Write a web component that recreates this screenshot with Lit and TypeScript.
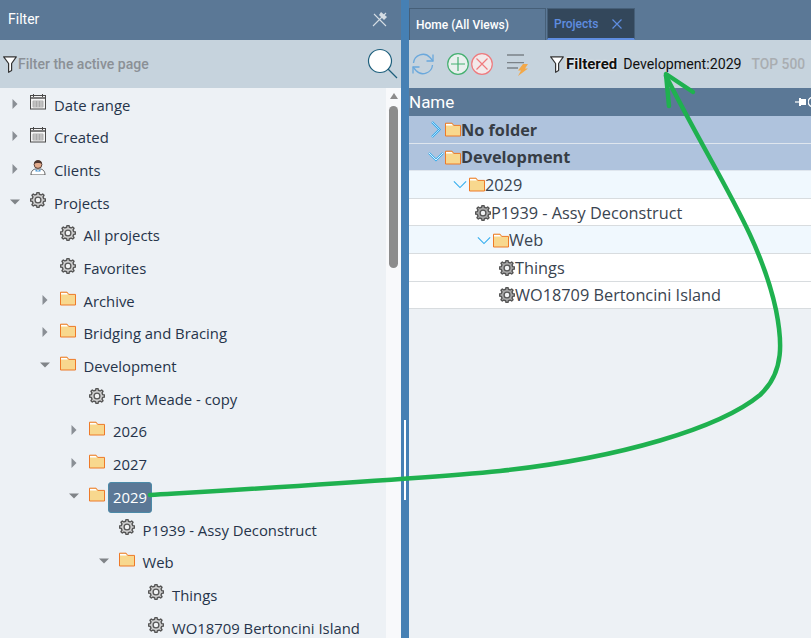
import { LitElement, html, css, svg } from "lit";
import { customElement } from "lit/decorators.js";

function gearPath(cx: number, cy: number, ro: number, ri: number, n = 8) {
  const pts: string[] = [];
  const step = (Math.PI * 2) / n;
  for (let i = 0; i < n; i++) {
    const a = i * step - Math.PI / 2;
    const w = step * 0.2;
    const v = step * 0.3;
    const p = (r: number, t: number) => `${(cx + r * Math.cos(t)).toFixed(2)} ${(cy + r * Math.sin(t)).toFixed(2)}`;
    pts.push(p(ri, a - v), p(ro, a - w * 0.8), p(ro, a + w * 0.8), p(ri, a + v));
  }
  return "M" + pts.join("L") + "Z";
}
const gear = (fill: string) => html`<svg class="ic" viewBox="0 0 16 16" width="16" height="16">
  <path d=${gearPath(8, 8, 7.6, 5.9)} fill=${fill} stroke="#555" stroke-width="1.4" stroke-linejoin="round"></path>
  <circle cx="8" cy="8" r="2.9" fill="#f2f3f4" stroke="#555" stroke-width="1.3"></circle>
</svg>`;
const folder = html`<svg class="ic" viewBox="0 0 16 15" width="16" height="15">
  <path d="M.5 14V1.2h6.6l1.6 2.2h6.8V14z" fill="#f8d88e" stroke="#ee7a28" stroke-width="1"></path>
  <path d="M1 2h5.7l1.1 1.5H1z" fill="#fff"></path>
</svg>`;
const calendar = html`<svg class="ic" viewBox="0 0 16 16" width="16" height="16">
  <rect x=".5" y="1.5" width="15" height="13.5" fill="#f4f4f4" stroke="#4a4a4a"></rect>
  <path d="M.5 4h15" stroke="#4a4a4a" stroke-width="1.4"></path>
  <path d="M3.5 0v3M12.5 0v3" stroke="#4a4a4a"></path>
  <path d="M3 7h10v6H3zM3 9h10M3 11h10M6.5 7v6M9.500 7v6" fill="#d4d4d4" stroke="#a3a3a3" stroke-width=".8"></path>
</svg>`;
const person = html`<svg class="ic" viewBox="0 0 16 16" width="16" height="16">
  <path d="M1 16c0-4 2-5.500 4.500-6h5c2.500.5 4.500 2 4.500 6z" fill="#fff" stroke="#555" stroke-width="1"></path>
  <path d="M5.500 10l2.500 2 2.500-2v2.500h-5z" fill="#4f9ad4"></path>
  <circle cx="8" cy="5.500" r="3.900" fill="#e3ab8c" stroke="#5a4138" stroke-width="1"></circle>
  <path d="M4.100 5C4.300 2 6 1.200 8 1.200s3.700 .8 3.900 3.800C10 3.600 6 3.600 4.100 5z" fill="#4d362e"></path>
</svg>`;
const funnel = html`<svg viewBox="0 0 14 17" width="14" height="17">
  <path d="M.7 .8h12.600L8.600 7.500V14.500l-3 1.800V7.500z" fill="#fff" stroke="#333" stroke-width="1.200" stroke-linejoin="round"></path>
</svg>`;

type L = { t: string; l: number; c?: "r" | "d"; i: "cal" | "per" | "gear" | "fol"; sel?: boolean };
const left: L[] = [
  { t: "Date range", l: 0, c: "r", i: "cal" },
  { t: "Created", l: 0, c: "r", i: "cal" },
  { t: "Clients", l: 0, c: "r", i: "per" },
  { t: "Projects", l: 0, c: "d", i: "gear" },
  { t: "All projects", l: 1, i: "gear" },
  { t: "Favorites", l: 1, i: "gear" },
  { t: "Archive", l: 1, c: "r", i: "fol" },
  { t: "Bridging and Bracing", l: 1, c: "r", i: "fol" },
  { t: "Development", l: 1, c: "d", i: "fol" },
  { t: "Fort Meade - copy", l: 2, i: "gear" },
  { t: "2026", l: 2, c: "r", i: "fol" },
  { t: "2027", l: 2, c: "r", i: "fol" },
  { t: "2029", l: 2, c: "d", i: "fol", sel: true },
  { t: "P1939 - Assy Deconstruct", l: 3, i: "gear" },
  { t: "Web", l: 3, c: "d", i: "fol" },
  { t: "Things", l: 4, i: "gear" },
  { t: "WO18709 Bertoncini Island", l: 4, i: "gear" },
];
type R = { t: string; l: number; kind: "group" | "sub" | "leaf"; c?: "r" | "d" };
const right: R[] = [
  { t: "No folder", l: 0, kind: "group", c: "r" },
  { t: "Development", l: 0, kind: "group", c: "d" },
  { t: "2029", l: 1, kind: "sub", c: "d" },
  { t: "P1939 - Assy Deconstruct", l: 2, kind: "leaf" },
  { t: "Web", l: 2, kind: "sub", c: "d" },
  { t: "Things", l: 3, kind: "leaf" },
  { t: "WO18709 Bertoncini Island", l: 3, kind: "leaf" },
];

@customElement("app-root")
export class AppRoot extends LitElement {
  static styles = css`
    :host { display: block; position: relative; height: 638px; width: 811px; overflow: hidden; font-family: "Roboto", sans-serif; background: #edf1f5; }
    .root { display: flex; height: 100%; }
    .leftp { width: 401px; display: flex; flex-direction: column; flex: none; }
    .split { width: 8px; flex: none; background: #4680b4; display: flex; justify-content: center; padding-top: 420px; box-sizing: border-box; }
    .grip { width: 2px; height: 80px; background: #fff; }
    .rightp { flex: 1; display: flex; flex-direction: column; min-width: 0; }
    .phead { height: 40px; flex: none; background: #5b7896; display: flex; align-items: center; justify-content: space-between; padding: 0 13px 2px 8px; color: #fff; font-size: 14px; box-sizing: border-box; }
    .search { height: 48px; flex: none; background: #c6d3dd; display: flex; align-items: center; padding: 0 3px; box-sizing: border-box; color: #8b9096; font-size: 14px; font-weight: 500; }
    .search .ph { flex: 1; margin-left: 1px; }
    .body { flex: 1; display: flex; min-height: 0; }
    .tree { flex: 1; overflow: hidden; font-family: "Open Sans", sans-serif; font-size: 14.850px; color: #26344a; min-width: 0; padding-top: .5px; }
    .row { height: 32.7px; display: flex; align-items: center; white-space: nowrap; padding-top: .5px; box-sizing: border-box; }
    .chev { width: 18px; flex: none; display: flex; justify-content: center; margin-bottom: 3px; }
    .ic { flex: none; }
    .tree .ic { margin: 0 0 6px 6px; }
    .lab { margin-left: 3px; padding: 0 4px; line-height: 29px; border: 1px solid transparent; border-radius: 3px; }
    .lab.sel { background: #5b7896; border-color: #4b8aa8; color: #fff; }
    .sb { width: 15px; flex: none; background: #f8f9fb; display: flex; flex-direction: column; align-items: center; padding-top: 5px; box-sizing: border-box; }
    .sbup { width: 0; height: 0; border: 4.500px solid transparent; border-top: 0; border-bottom: 6px solid #8c8c8c; }
    .thumb { width: 9px; height: 162px; background: #8c8c8c; border-radius: 5px; margin-top: 7px; }
    .tabs { height: 40px; flex: none; background: #5b7896; display: flex; align-items: flex-end; padding-top: 8px; box-sizing: border-box; }
    .tab { height: 32px; box-sizing: border-box; display: flex; align-items: center; font-size: 12px; font-weight: 500; border: 1px solid #465f78; border-bottom: 0; }
    .tab.home { width: 137px; padding-left: 6px; color: #fff; background: #5b7896; margin-right: 1px; }
    .tab.act { width: 88px; padding-left: 6px; background: #33475b; color: #5f8de0; border-bottom: 2px solid #5f8de0; gap: 14px; }
    .tool { height: 48px; flex: none; background: #c6d3dd; display: flex; align-items: center; box-sizing: border-box; padding-left: 3px; }
    .filtered { font-size: 15px; font-weight: 700; color: #111; margin: 0 6px 0 2px; text-shadow: 0 0 2px #fff, 0 0 2px #fff; }
    .dev { font-size: 14.200px; color: #111; }
    .top { font-size: 13.800px; font-weight: 500; color: #a9adb1; margin-left: 10px; white-space: nowrap; }
    .tool svg { flex: none; }
    .nameh { height: 28px; flex: none; background: #5b7896; color: #fff; font-size: 17px; display: flex; align-items: center; justify-content: space-between; box-sizing: border-box; }
    .pin { display: flex; align-items: center; gap: 2px; }
    .rr { height: 27.6px; display: flex; align-items: center; box-sizing: border-box; padding-top: 1px; border-bottom: 1px solid #d8dcdf; font-family: "Open Sans", sans-serif; font-size: 16.300px; color: #3a4450; white-space: nowrap; }
    .rr.group { background: #afc3dd; font-weight: 700; border-bottom-color: #dfe6ee; color: #373d45; }
    .rr.sub { background: #f0f8fe; }
    .rr.leaf { background: #fff; }
    .rr.leaf .ic { margin-left: 1px; }
    .rchev { width: 19px; flex: none; display: flex; justify-content: center; }
    .overlay { position: absolute; left: 0; top: 0; pointer-events: none; }
  `;

  private tri(c?: "r" | "d") {
    if (c === "r") return html`<svg width="6" height="10" viewBox="0 0 6 10"><path d="M.5 0L5.500 5 .5 10z" fill="#8a8f95"></path></svg>`;
    if (c === "d") return html`<svg width="10" height="6" viewBox="0 0 10 6"><path d="M0 .5h10L5 5.500z" fill="#808488"></path></svg>`;
    return "";
  }
  private rchev(c: "r" | "d" | undefined, big: boolean) {
    if (c === "r") return html`<svg width="10" height="17" viewBox="0 0 10 17" fill="none"><path d="M1 1l7.500 7.500L1 16" stroke="#2ea8ee" stroke-width="2.200"></path><path d="M1 1l7.500 7.500L1 16" stroke="#e8f6ff" stroke-width=".7"></path></svg>`;
    if (big) return html`<svg width="16" height="10" viewBox="0 0 16 10" fill="none"><path d="M1 1l7 7 7-7" stroke="#35aeee" stroke-width="2.200"></path><path d="M1 1l7 7 7-7" stroke="#f2faff" stroke-width=".9"></path></svg>`;
    return html`<svg width="14" height="9" viewBox="0 0 16 9"><path d="M1 1l7 7 7-7" fill="none" stroke="#35aeee" stroke-width="1.300"></path></svg>`;
  }
  private icon(i: L["i"]) {
    return i === "cal" ? calendar : i === "per" ? person : i === "gear" ? gear("#cfcfcf") : folder;
  }

  render() {
    return html`
      <div class="root">
        <section class="leftp">
          <div class="phead"><span>Filter</span>
            <svg width="16" height="16" viewBox="0 0 16 16"><path d="M1 15L14 2M2 3l12 12" stroke="#d5dde4" stroke-width="1.100"></path><path d="M9 1l6 5-3 3-5-5z" fill="#d5dde4"></path></svg>
          </div>
          <div class="search">${funnel}<span class="ph">Filter the active page</span>
            <svg width="32" height="34" viewBox="0 0 32 34"><circle cx="14" cy="14" r="11.500" fill="#fff" stroke="#1d5f7c" stroke-width="1.200"></circle><path d="M22 22l9 9" stroke="#1d5f7c" stroke-width="1.200"></path></svg>
          </div>
          <div class="body">
            <div class="tree">
              ${left.map((r) => html`<div class="row" style="padding-left:${6 + r.l * 29.5}px">
                <span class="chev">${this.tri(r.c)}</span>${this.icon(r.i)}<span class="lab ${r.sel ? "sel" : ""}">${r.t}</span></div>`)}
            </div>
            <div class="sb"><div class="sbup"></div><div class="thumb"></div></div>
          </div>
        </section>
        <div class="split"><div class="grip"></div></div>
        <section class="rightp">
          <div class="tabs">
            <div class="tab home">Home (All Views)</div>
            <div class="tab act">Projects
              <svg width="10" height="10" viewBox="0 0 10 10"><path d="M.5 .5l9 9M9.500 .5l-9 9" stroke="#5f8de0" stroke-width="1.200"></path></svg>
            </div>
          </div>
          <div class="tool">
            <svg width="22" height="24" viewBox="0 0 22 24" fill="none" stroke="#6aa8dc" stroke-width="1.300"><path d="M1.500 11A9.500 9.500 0 0 1 18 5.500L21 9"></path><path d="M21 2.500V9h-6.500"></path><path d="M20.500 13A9.500 9.500 0 0 1 4 18.500L1 15"></path><path d="M1 21.500V15h6.500"></path></svg>
            <svg style="margin-left:13px" width="22" height="22" viewBox="0 0 22 22"><circle cx="11" cy="11" r="10.300" fill="#e9f0ee" stroke="#45b070" stroke-width="1.200"></circle><path d="M11 4v14M4 11h14" stroke="#45b070" stroke-width="1.200"></path></svg>
            <svg style="margin-left:2px" width="22" height="22" viewBox="0 0 22 22"><circle cx="11" cy="11" r="10.300" fill="#f3e9ea" stroke="#ef7a7e" stroke-width="1.200"></circle><path d="M5.500 5.500l11 11M16.500 5.500l-11 11" stroke="#ef7a7e" stroke-width="1.200"></path></svg>
            <svg style="margin-left:12px" width="24" height="24" viewBox="0 0 24 24"><path d="M2 3h17M2 10.700h17M2 16h11" stroke="#7b8288" stroke-width="1.300"></path><path d="M18 12h5l-3 4.500h3L13 24l3-5.500h-3z" fill="#f3a848"></path></svg>
            <span style="margin-left:21px;display:flex">${funnel}</span>
            <span class="filtered">Filtered</span><span class="dev">Development:2029</span><span class="top">TOP 500</span>
          </div>
          <div class="nameh"><span>Name</span>
            <span class="pin"><svg width="11" height="8" viewBox="0 0 11 8"><path d="M0 4h5" stroke="#fff" stroke-width="1.200"></path><path d="M4 0h2v1h5v6H6v1H4z" fill="#fff"></path></svg><svg width="3" height="10" viewBox="0 0 3 10"><path d="M3 .5A5 5 0 0 0 3 9.500" fill="none" stroke="#fff" stroke-width="1.200"></path></svg></span>
          </div>
          ${right.map((r) => html`<div class="rr ${r.kind}" style="padding-left:${17 + r.l * 24}px">
            ${r.kind === "leaf" ? gear("#a9a9a9") : html`<span class="rchev">${this.rchev(r.c, r.kind === "group")}</span>${folder}`}
            <span>${r.t}</span></div>`)}
        </section>
      </div>
      <svg class="overlay" width="811" height="638" viewBox="0 0 811 638" fill="none" stroke="#1fb14f" stroke-width="4.500">
        ${svg`<path d="M150 495 C 300 486 420 479 500 471 C 620 458 720 428 760 395 C 785 372 782 340 776 310 C 760 235 716 175 666 76" stroke-linecap="round"></path>
        <path d="M693 92 L666 74 L669 106" stroke-linecap="round" stroke-linejoin="round"></path>`}
      </svg>
    `;
  }
}
